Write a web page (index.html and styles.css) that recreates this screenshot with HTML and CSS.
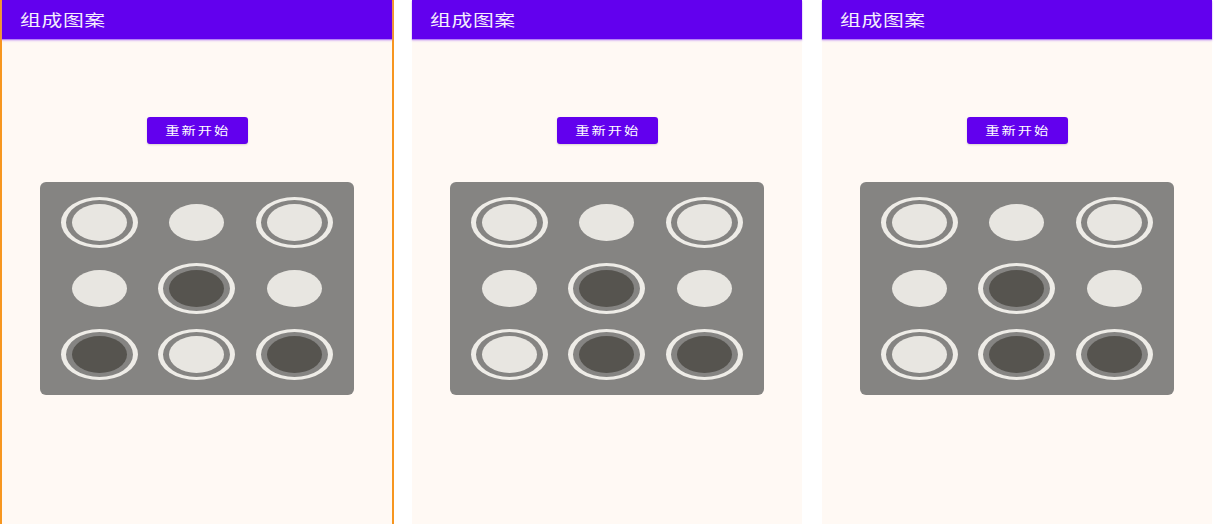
FILE: index.html
```html
<!DOCTYPE html>
<html lang="zh">
<head>
<meta charset="utf-8">
<title>组成图案</title>
<link rel="stylesheet" href="styles.css">
</head>
<body>
<div class="screens">
  <section class="phone phone-active">
    <header class="appbar"><span class="title">组成图案</span></header>
    <main class="content">
      <button class="restart"><span class="restart-label">重新开始</span></button>
      <div class="board">
        <div class="cell"><div class="ring"><div class="dot light"></div></div></div>
        <div class="cell"><div class="dot light"></div></div>
        <div class="cell"><div class="ring"><div class="dot light"></div></div></div>
        <div class="cell"><div class="dot light"></div></div>
        <div class="cell"><div class="ring"><div class="dot dark"></div></div></div>
        <div class="cell"><div class="dot light"></div></div>
        <div class="cell"><div class="ring"><div class="dot dark"></div></div></div>
        <div class="cell"><div class="ring"><div class="dot light"></div></div></div>
        <div class="cell"><div class="ring"><div class="dot dark"></div></div></div>
      </div>
    </main>
  </section>
  <section class="phone phone-mid">
    <header class="appbar"><span class="title">组成图案</span></header>
    <main class="content">
      <button class="restart"><span class="restart-label">重新开始</span></button>
      <div class="board">
        <div class="cell"><div class="ring"><div class="dot light"></div></div></div>
        <div class="cell"><div class="dot light"></div></div>
        <div class="cell"><div class="ring"><div class="dot light"></div></div></div>
        <div class="cell"><div class="dot light"></div></div>
        <div class="cell"><div class="ring"><div class="dot dark"></div></div></div>
        <div class="cell"><div class="dot light"></div></div>
        <div class="cell"><div class="ring"><div class="dot light"></div></div></div>
        <div class="cell"><div class="ring"><div class="dot dark"></div></div></div>
        <div class="cell"><div class="ring"><div class="dot dark"></div></div></div>
      </div>
    </main>
  </section>
  <section class="phone">
    <header class="appbar"><span class="title">组成图案</span></header>
    <main class="content">
      <button class="restart"><span class="restart-label">重新开始</span></button>
      <div class="board">
        <div class="cell"><div class="ring"><div class="dot light"></div></div></div>
        <div class="cell"><div class="dot light"></div></div>
        <div class="cell"><div class="ring"><div class="dot light"></div></div></div>
        <div class="cell"><div class="dot light"></div></div>
        <div class="cell"><div class="ring"><div class="dot dark"></div></div></div>
        <div class="cell"><div class="dot light"></div></div>
        <div class="cell"><div class="ring"><div class="dot light"></div></div></div>
        <div class="cell"><div class="ring"><div class="dot dark"></div></div></div>
        <div class="cell"><div class="ring"><div class="dot dark"></div></div></div>
      </div>
    </main>
  </section>
</div>
</body>
</html>
```
FILE: styles.css
```css
html, body {
  margin: 0;
  padding: 0;
  background: #ffffff;
  font-family: "Noto Sans CJK SC", "Noto Sans", sans-serif;
}

.screens {
  display: flex;
  align-items: stretch;
  height: 524px;
  overflow: hidden;
}

.phone {
  width: 390px;
  flex: 0 0 auto;
  height: 524px;
  background: #fff9f4;
  display: flex;
  flex-direction: column;
}

.phone-active {
  border-left: 2px solid #f7961f;
  border-right: 2px solid #f7961f;
  margin-right: 18px;
}

.phone-mid {
  margin-right: 20px;
}

.appbar {
  height: 39px;
  background: #6200ee;
  box-shadow: 0 1px 1px #b583f5, 0 2px 2px rgba(180, 130, 240, 0.35);
  display: flex;
  align-items: center;
  padding-left: 18px;
  position: relative;
  z-index: 1;
}

.title {
  display: inline-block;
  color: #f4eefc;
  font-size: 16px;
  font-weight: 400;
  letter-spacing: 0.5px;
  line-height: 1;
  margin-top: -2px;
  transform: scaleX(1.3);
  transform-origin: left center;
}

.content {
  display: flex;
  flex-direction: column;
  align-items: center;
}

.restart {
  margin-top: 78px;
  width: 101px;
  height: 27px;
  border: none;
  border-radius: 3px;
  background: #6200ee;
  color: #ffffff;
  font-family: "Noto Sans CJK SC", sans-serif;
  padding: 0;
  display: flex;
  align-items: center;
  justify-content: center;
  box-shadow: 0 1px 2px rgba(0, 0, 0, 0.15);
}

.restart-label {
  display: inline-block;
  font-size: 11px;
  font-weight: 400;
  letter-spacing: 1.5px;
  line-height: 1;
  transform: scaleX(1.3);
  padding-left: 1.5px;
}

.board {
  margin-top: 38px;
  width: 314px;
  height: 213px;
  box-sizing: border-box;
  padding: 7px 11px 8px;
  background: #858482;
  border-radius: 6px;
  display: grid;
  grid-template-columns: repeat(3, 1fr);
  grid-template-rows: repeat(3, 66px);
}

.cell {
  display: flex;
  align-items: center;
  justify-content: center;
}

.ring {
  border-style: solid;
  border-color: #eeece7;
  border-width: 3px 5px;
  padding: 4px 6px;
  border-radius: 50%;
}

.dot {
  width: 55px;
  height: 37px;
  border-radius: 50%;
}

.dot.light {
  background: #e8e6e1;
}

.dot.dark {
  background: #56544f;
}
```
